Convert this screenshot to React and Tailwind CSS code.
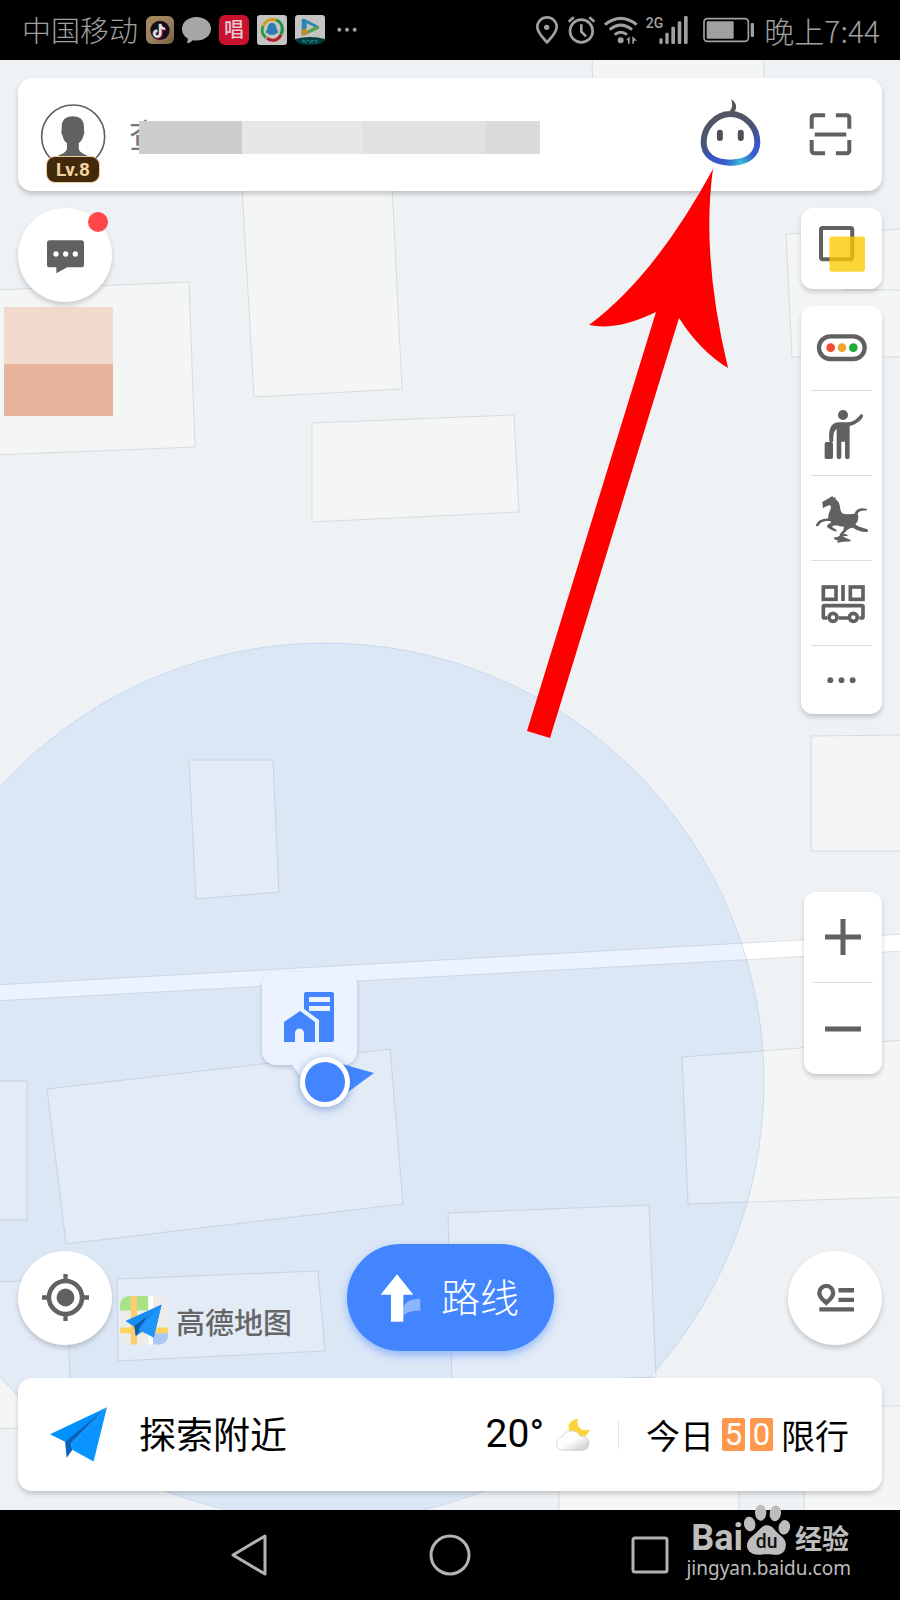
import React from "react";

const SANS = "font-['Roboto','Noto_Sans_CJK_SC',sans-serif]";

/* ---------- status bar ---------- */

function StatusBar() {
  return (
    <header className="flex h-[60px] shrink-0 items-center justify-between bg-black pl-[22px] pr-5 text-[#a0a0a0]">
      <div className="flex items-center gap-2">
        <span className="pt-1 text-[29px] font-light leading-none">中国移动</span>
        <svg viewBox="0 0 84 84" className="size-7" aria-hidden="true">
          <defs>
            <linearGradient id="gold" x1="0" y1="0" x2="1" y2="1">
              <stop offset="0" stopColor="#a8895c" />
              <stop offset="0.5" stopColor="#9b8160" />
              <stop offset="1" stopColor="#7a5f3c" />
            </linearGradient>
          </defs>
          <rect width="84" height="84" rx="18" fill="url(#gold)" />
          <circle cx="42" cy="43" r="29" fill="#190d19" />
          <g fill="none" strokeWidth="7">
            <path d="M43 24v29a9 9 0 1 1-9-9M43 26c1 8 6 12 14 12" stroke="#2bb5b5" transform="translate(-2 -1)" />
            <path d="M43 24v29a9 9 0 1 1-9-9M43 26c1 8 6 12 14 12" stroke="#c02a50" transform="translate(3 2)" />
            <path d="M43 24v29a9 9 0 1 1-9-9M43 26c1 8 6 12 14 12" stroke="#e4e4e4" />
          </g>
        </svg>
        <svg viewBox="0 0 86 80" className="w-[29px]" fill="#a6a6a6" aria-hidden="true">
          <path d="M43 0c24 0 43 15 43 35S67 70 43 70c-4 0-8 0-11-1-6 6-12 9-19 10 3-4 5-9 4-15C7 58 0 48 0 35 0 15 19 0 43 0Z" />
        </svg>
        <span className="flex size-[30px] items-center justify-center rounded-md bg-[#c8102f] text-[20px] font-medium leading-none text-[#e6c9cd]">
          唱
        </span>
        <svg viewBox="0 0 90 90" className="size-[30px]" aria-hidden="true">
          <rect width="90" height="90" rx="10" fill="#c4c4c4" />
          <g fill="none" strokeWidth="9">
            <path d="M19 32c8-18 27-23 43-15" stroke="#d19a1c" />
            <path d="M58 15c18 8 23 28 13 44" stroke="#1d9344" />
            <path d="M72 60c-10 18-28 20-42 10" stroke="#b51d2a" />
            <path d="M18 33c-6 14-1 28 9 35" stroke="#2f9b38" />
          </g>
          <path d="M45 24c9 0 13 6 13 15l5 11c1 4-1 5-4 3-2 5-6 6-14 6s-12-1-14-6c-3 2-5 1-4-3l5-11c0-9 4-15 13-15Z" fill="#2c7cb0" />
        </svg>
        <svg viewBox="0 0 90 90" className="size-[30px]" aria-hidden="true">
          <path d="M10 0h70a10 10 0 0 1 10 10v62H0V10A10 10 0 0 1 10 0Z" fill="#c4c4c4" />
          <path d="M0 72q45-12 90 0c0 8-12 18-45 18S0 80 0 72Z" fill="#073b3b" />
          <path d="M20 76h10m4 0h8m4 0h10m4 0h8M22 81h14m6 0h12m5 0h8" stroke="#1a8f8f" strokeWidth="3" />
          <path d="M20 16c0-5 5-6 9-4l40 20c5 3 5 7 0 10L29 60c-5 2-9 1-9-4Z" fill="#2a86b5" />
          <path d="M20 50l49-17c4 3 4 6 0 9L29 60c-5 2-9 1-9-4Z" fill="#56a33b" />
          <path d="M20 44l18-4v15l-9 5c-5 2-9 1-9-4Z" fill="#c78b25" />
          <path d="M35 25l23 11-23 12Z" fill="#c4c4c4" />
        </svg>
        <svg viewBox="0 0 60 16" className="ml-1 w-5" fill="#a0a0a0" aria-hidden="true">
          <circle cx="7" cy="8" r="6" />
          <circle cx="30" cy="8" r="6" />
          <circle cx="53" cy="8" r="6" />
        </svg>
      </div>
      <div className="flex items-center gap-2">
        <svg viewBox="258 45 72 90" className="w-6" fill="none" stroke="#a0a0a0" strokeWidth="8" aria-hidden="true">
          <path d="M294 127c-14-16-29-29-29-46a29 29 0 0 1 58 0c0 17-15 30-29 46Z" />
          <circle cx="293" cy="82" r="8" fill="#a0a0a0" stroke="none" />
        </svg>
        <svg viewBox="354 45 87 90" className="w-[29px]" fill="none" stroke="#a0a0a0" strokeWidth="8" aria-hidden="true">
          <circle cx="397" cy="93" r="34" />
          <path d="M397 73v22l14 14M359 65l15-13M436 65l-15-13" />
        </svg>
        <svg viewBox="462 45 102 90" className="w-[34px]" fill="none" stroke="#a0a0a0" strokeWidth="9" aria-hidden="true">
          <path d="M465 74q47-38 95 0M479 89q33-27 67 0M494 104q18-14 37 0" />
          <circle cx="512" cy="121" r="9" fill="#a0a0a0" stroke="none" />
          <path d="M528 121l11-12v22h-5v-10ZM547 109v22h5v-9h9Z" fill="#a0a0a0" stroke="none" />
        </svg>
        <div className="flex items-end">
          <span className="self-start text-[14px] font-medium leading-[14px]">2G</span>
          <svg viewBox="632 48 90 84" className="-ml-1 h-7 w-[30px]" fill="#a0a0a0" aria-hidden="true">
            <rect x="633" y="115" width="10" height="17" rx="4" />
            <rect x="651" y="98" width="10" height="34" rx="4" />
            <rect x="669" y="80" width="11" height="52" rx="4" />
            <rect x="688" y="64" width="11" height="68" rx="4" />
            <rect x="707" y="48" width="11" height="84" rx="4" />
          </svg>
        </div>
        <svg viewBox="750 45 165 90" className="ml-1 w-[55px]" aria-hidden="true">
          <rect x="759" y="56" width="133" height="68" rx="10" fill="none" stroke="#a0a0a0" strokeWidth="5" />
          <rect x="767" y="64" width="81" height="52" rx="3" fill="#a0a0a0" />
          <rect x="899" y="69" width="10" height="42" rx="4" fill="#a0a0a0" />
        </svg>
        <time className="font-['Noto_Sans_CJK_SC',sans-serif] text-[30px] font-light leading-none">晚上7:44</time>
      </div>
    </header>
  );
}

/* ---------- map ---------- */

const BUILDINGS = [
  "592,50 763,50 766,120 593,120",
  "241,170 391,165 402,389 254,397",
  "-5,290 189,282 195,447 -5,455",
  "312,423 514,415 519,512 312,522",
  "786,234 905,229 905,357 792,357",
  "811,736 905,735 905,851 811,851",
  "682,1057 905,1040 905,1197 688,1204",
  "189,760 273,760 279,892 196,899",
  "47,1089 390,1049 403,1204 66,1244",
  "-5,1081 27,1081 27,1220 -5,1220",
  "448,1213 649,1205 656,1377 452,1385",
  "117,1279 318,1271 325,1351 118,1361",
  "-5,1282 66,1279 72,1426 -5,1429",
  "559,1470 739,1470 739,1515 559,1515",
  "804,1406 905,1406 905,1515 804,1515",
];

function MapCanvas() {
  return (
    <svg viewBox="0 60 900 1450" preserveAspectRatio="xMidYMid slice" className="absolute inset-0 size-full" aria-hidden="true">
      <defs>
        <filter id="soft" x="-50%" y="-50%" width="200%" height="200%">
          <feDropShadow dx="0" dy="2" stdDeviation="5" floodColor="#3f6fc0" floodOpacity="0.6" />
        </filter>
        <filter id="lift" x="-30%" y="-30%" width="160%" height="160%">
          <feDropShadow dx="0" dy="2" stdDeviation="2" floodColor="#6a7fa5" floodOpacity="0.4" />
        </filter>
      </defs>
      <rect y="60" width="900" height="1450" fill="#eef2f5" />
      <g fill="#f4f6f5" stroke="#d8dbdd" strokeWidth="1">
        {BUILDINGS.map((points) => (
          <polygon key={points} points={points} />
        ))}
      </g>
      <path d="M-5 985L905 934V951L-5 1001Z" fill="#fff" stroke="#dcdfe2" />
      <path d="M843 290H900" stroke="#d6dadc" />
      <circle cx="325" cy="1082" r="439" fill="#4285ff" fillOpacity="0.1" stroke="#9fbbe8" strokeOpacity="0.4" />
      <rect x="4" y="307" width="109" height="57" fill="#f2d9cd" />
      <rect x="4" y="364" width="109" height="52" fill="#e8b49c" />
      <path
        d="M276 972h67a14 14 0 0 1 14 14v65a14 14 0 0 1-14 14l-28 20-11-4-12-16h-16a14 14 0 0 1-14-14v-65a14 14 0 0 1 14-14Z"
        fill="#edf3fe"
        filter="url(#lift)"
      />
      <g fill="#4285ff">
        <path d="M306 992h26a2 2 0 0 1 2 2v46a2 2 0 0 1-2 2h-13v-22l-15-11v-15a2 2 0 0 1 2-2Z" />
        <path d="M300 1011l15 11v20h-11v-9a4 4 0 0 0-9 0v9h-11v-20Z" />
        <path d="M309 997h21v5h-21ZM309 1006h21v5h-21Z" fill="#edf3fe" />
        <path d="M342 1064l32 9-26 19Z" />
      </g>
      <circle cx="325" cy="1082" r="25" fill="#fff" filter="url(#soft)" />
      <circle cx="325" cy="1082" r="20" fill="#4285ff" />
    </svg>
  );
}

/* ---------- search card ---------- */

function SearchCard() {
  return (
    <form className="flex h-[113px] items-center rounded-[14px] bg-white pl-[22px] pr-[30px] shadow-[0_3px_5px_rgba(0,0,0,0.2)]" onSubmit={(e) => e.preventDefault()}>
      <button type="button" aria-label="个人中心" className="relative mb-2 h-20 w-[66px] shrink-0 self-end">
        <svg viewBox="117 302 201 201" className="absolute left-0 top-0 w-[66px]" aria-hidden="true">
          <circle cx="218" cy="404" r="96" fill="#fff" stroke="#616161" strokeWidth="5" />
          <path d="M217 342c23 0 34 12 34 34v9c2 4 1 14-2 16-2 11-7 18-14 23v18c4 13 20 16 38 26-34 37-80 37-112 0 18-10 34-13 38-26v-18c-7-5-12-12-13-23-4-2-5-12-3-16v-9c0-22 11-34 34-34Z" fill="#616161" />
        </svg>
        <span className="absolute bottom-0 left-[6px] flex h-[27px] w-[54px] items-center justify-center rounded-[9px] border border-[#f0cf9c] bg-[#42290c] text-[19px] font-bold leading-none text-[#f5d2a0]">
          Lv.8
        </span>
      </button>
      <label className="relative ml-[23px] flex h-[52px] min-w-0 flex-1 items-center">
        <span className="sr-only">搜索</span>
        <input type="text" placeholder="查" className="h-[52px] w-full bg-transparent pt-1 text-[33px] outline-none placeholder:text-[#777]" />
        <span className="absolute left-[10px] top-[12px] flex h-[33px] w-[401px]" aria-hidden="true">
          <span className="w-[103px] bg-[#cdcdcd]" />
          <span className="w-[121px] bg-[#e7e7e7]" />
          <span className="w-[122px] bg-[#e1e1e1]" />
          <span className="flex-1 bg-[#dbdbdb]" />
        </span>
      </label>
      <button type="button" aria-label="语音助手" className="mb-1 shrink-0">
        <svg viewBox="754 290 184 208" className="w-[61px]" aria-hidden="true">
          <defs>
            <linearGradient id="bot" x1="0.3" y1="0" x2="0.7" y2="1">
              <stop offset="0" stopColor="#54565c" />
              <stop offset="0.45" stopColor="#4a5478" />
              <stop offset="0.75" stopColor="#3a55c8" />
              <stop offset="1" stopColor="#3566d0" />
            </linearGradient>
            <radialGradient id="glow" gradientUnits="userSpaceOnUse" cx="876" cy="486" r="46">
              <stop offset="0" stopColor="#35c3d6" />
              <stop offset="1" stopColor="#35a0d6" stopOpacity="0" />
            </radialGradient>
          </defs>
          <g fill="none" strokeWidth="18">
            <path d="M846 338c46 0 81 42 81 85 0 41-32 62-81 62s-81-21-81-62c0-43 35-85 81-85Z" stroke="url(#bot)" />
            <path d="M846 338c46 0 81 42 81 85 0 41-32 62-81 62s-81-21-81-62c0-43 35-85 81-85Z" stroke="url(#glow)" />
          </g>
          <path d="M848 294c19 12 18 27 8 42l-14-4c10-11 11-22 6-38Z" fill="#54565c" />
          <rect x="805" y="386" width="18" height="34" rx="9" fill="#4e5056" />
          <rect x="868" y="386" width="18" height="34" rx="9" fill="#4e5056" />
        </svg>
      </button>
      <button type="button" aria-label="扫一扫" className="ml-12 shrink-0">
        <svg viewBox="1080 343 128 128" className="w-[43px]" fill="none" stroke="#616161" strokeWidth="12" aria-hidden="true">
          <path d="M1088 390v-31q0-9 9-9h31M1160 350h31q9 0 9 9v31M1200 423v31q0 9-9 9h-31M1128 463h-31q-9 0-9-9v-31M1097 407h94" />
        </svg>
      </button>
    </form>
  );
}

/* ---------- side tools ---------- */

const CARD = "bg-white shadow-[0_3px_5px_rgba(0,0,0,0.18)]";

function TrafficIcon() {
  return (
    <svg viewBox="94 120 180 165" className="w-[60px]" aria-hidden="true">
      <rect x="115" y="169" width="137" height="68" rx="34" fill="none" stroke="#616161" strokeWidth="13" />
      <circle cx="150" cy="203" r="13" fill="#f04a30" />
      <circle cx="184" cy="203" r="13" fill="#f2a230" />
      <circle cx="218" cy="203" r="13" fill="#1fae35" />
    </svg>
  );
}

function TravelerIcon() {
  return (
    <svg viewBox="94 372 180 165" className="w-[60px]" fill="#616161" aria-hidden="true">
      <circle cx="187" cy="402" r="15" />
      <path d="M146 480c-3-34 4-55 27-56h28c15-1 28-9 38-23 5-4 11 1 7 8-9 14-22 22-39 26v94c0 7-14 7-14 0v-47h-11v47c0 7-14 7-14 0v-85c-7 4-11 14-10 35-1 6-11 6-12 1Z" />
      <rect x="132" y="483" width="25" height="51" rx="5" />
    </svg>
  );
}

function HorseIcon() {
  return (
    <svg viewBox="94 627 180 165" className="w-[60px] overflow-visible" fill="#616161" aria-hidden="true">
      <path d="M125 663l22-13 8-5 3 5 6-2 1 7c8 5 12 14 13 23 1 11 4 19 12 21 12 1 22 0 32-1 2-9 11-16 23-16l14 2v4l-13 1c-8 0-14 4-15 10 4 12 1 23-7 31 5 4 10 7 17 9l19 6c4 2 2 8-3 8-17-1-29-5-40-13-7 0-14 3-18 8l-11 11 10 1 4 4-12 2-12-2-1-4 11-12 2-11c-9 0-16-2-23-4-10 1-14 3-12 6l12 7 1 6-10-3-17-9c-5-6 1-12 10-15l-2-5c-11-1-21 0-28 5-4 3-6 7-9 11l-7-1c3-10 8-17 17-19 9-3 15-3 21-4-2-12 6-22 8-34l-3-6-14 5-7 5Z" />
      <path d="M158 770l14-3 9-6 7 6 10 5 12 5v4l-27 2-11 2-4-3 6-3-10-3Z" />
    </svg>
  );
}

function BusIcon() {
  return (
    <svg viewBox="94 882 180 165" className="w-[60px]" fill="none" stroke="#616161" strokeWidth="11" aria-hidden="true">
      <rect x="128" y="918" width="38" height="37" />
      <rect x="209" y="918" width="38" height="37" />
      <path d="M187 912v48M140 1011h-8q-4 0-4-4v-30q0-3 3-3h113q3 0 3 3v30q0 4-4 4h-7M174 1011h28" />
      <circle cx="157" cy="1009" r="12" />
      <circle cx="218" cy="1009" r="12" />
    </svg>
  );
}

const TOOLS = [
  { label: "实时路况", Icon: TrafficIcon },
  { label: "出行", Icon: TravelerIcon },
  { label: "景点", Icon: HorseIcon },
  { label: "公交", Icon: BusIcon },
];

function SideTools() {
  return (
    <div className="flex flex-col items-end justify-between">
      <div className="flex flex-col gap-[17px]">
        <button type="button" aria-label="图层" className={`flex h-[81px] w-[81px] items-center justify-center rounded-xl ${CARD}`}>
          <svg viewBox="1106 678 137 137" className="w-[46px]" aria-hidden="true">
            <rect x="1112" y="684" width="93" height="93" rx="5" fill="none" stroke="#616161" strokeWidth="12" />
            <rect x="1137" y="709" width="106" height="105" rx="8" fill="#fac800" fillOpacity="0.78" />
          </svg>
        </button>
        <div className={`flex w-[81px] flex-col items-center rounded-xl ${CARD}`}>
          {TOOLS.map(({ label, Icon }) => (
            <button key={label} type="button" aria-label={label} className="-mt-px flex h-[86px] w-[61px] items-center justify-center border-b border-[#dedede]">
              <Icon />
            </button>
          ))}
          <button type="button" aria-label="更多" className="flex h-[68px] w-full items-center justify-center">
            <svg viewBox="0 0 88 20" className="w-[29px]" fill="#616161" aria-hidden="true">
              <circle cx="10" cy="10" r="9" />
              <circle cx="44" cy="10" r="9" />
              <circle cx="78" cy="10" r="9" />
            </svg>
          </button>
        </div>
      </div>
      <div className={`flex w-[78px] flex-col items-center rounded-xl ${CARD}`}>
        <button type="button" aria-label="放大" className="flex h-[91px] w-[60px] items-center justify-center border-b border-[#dedede]">
          <svg viewBox="0 0 36 36" className="w-9" stroke="#616161" strokeWidth="5" aria-hidden="true">
            <path d="M0 18h36M18 0v36" />
          </svg>
        </button>
        <button type="button" aria-label="缩小" className="flex h-[91px] w-[60px] items-center justify-center">
          <svg viewBox="0 0 36 36" className="w-9" stroke="#616161" strokeWidth="5" aria-hidden="true">
            <path d="M0 18h36" />
          </svg>
        </button>
      </div>
    </div>
  );
}

function MessageButton() {
  return (
    <button type="button" aria-label="消息" className={`relative flex size-[94px] items-center justify-center rounded-full pt-1 ${CARD}`}>
      <svg viewBox="138 719 111 100" className="w-[37px]" aria-hidden="true">
        <path d="M146 720h95q8 0 8 8v65q0 8-8 8h-42l-33 18v-18h-20q-8 0-8-8v-65q0-8 8-8Z" fill="#616161" />
        <g fill="#fff">
          <circle cx="165" cy="761" r="8" />
          <circle cx="194" cy="761" r="8" />
          <circle cx="223" cy="761" r="8" />
        </g>
      </svg>
      <span className="absolute right-1 top-1 size-5 rounded-full bg-[#ff4648]" />
    </button>
  );
}

/* ---------- lower controls ---------- */

function LowerControls() {
  return (
    <div className="grid grid-cols-[1fr_auto_1fr] items-center">
      <div className="flex items-end gap-2">
        <button type="button" aria-label="定位" className={`flex size-[94px] items-center justify-center rounded-full ${CARD}`}>
          <svg viewBox="124 165 142 142" className="w-[47px]" aria-hidden="true">
            <circle cx="195" cy="236" r="50" fill="none" stroke="#616161" strokeWidth="14" />
            <circle cx="195" cy="236" r="27" fill="#616161" />
            <path d="M195 165v22M195 285v22M124 236h22M244 236h22" stroke="#616161" strokeWidth="13" />
          </svg>
        </button>
        <div className="flex items-center gap-2">
          <svg viewBox="359 233 142 144" className="w-12" aria-hidden="true">
            <defs>
              <clipPath id="tile">
                <rect x="359" y="233" width="142" height="144" rx="26" />
              </clipPath>
            </defs>
            <g clipPath="url(#tile)">
              <rect x="359" y="233" width="142" height="144" fill="#ececea" />
              <path d="M359 233h84v43h-84Z" fill="#a9e287" />
              <path d="M443 233h14v144h-14Z" fill="#fff" />
              <path d="M457 343h44v34h-44Z" fill="#a9c9f5" />
              <path d="M359 326h142v17H359Z" fill="#fcd462" />
              <path d="M391 233h18v144h-18Z" fill="#fdcd70" />
            </g>
            <path d="M375 307l107-49-23 98-34-18-19 14-4-28Z" fill="#178ef5" />
            <path d="M401 322l40-30-24 34-1 8-10 18Z" fill="#0c5cae" />
            <path d="M416 333l66-75-23 98Z" fill="#2196fa" />
          </svg>
          <span className="pt-2 text-[29px] font-medium leading-none text-[#666]">高德地图</span>
        </div>
      </div>
      <button type="button" className="flex h-[107px] w-[207px] items-center justify-center gap-5 rounded-full bg-[#4285ff] text-white shadow-[0_4px_8px_rgba(66,133,255,0.5)]">
        <svg viewBox="1142 160 120 144" className="w-10" aria-hidden="true">
          <path d="M1209 285v-20q2-30 51-31v36q-38-1-51 15Z" fill="#fff" fillOpacity="0.4" />
          <path d="M1190 161l49 61h-30v81h-37v-81h-31Z" fill="#fff" />
        </svg>
        <span className="pt-1 text-[39px] font-light leading-none">路线</span>
      </button>
      <button type="button" aria-label="收藏" className={`flex size-[94px] items-center justify-center justify-self-end rounded-full ${CARD}`}>
        <svg viewBox="1100 192 112 88" className="w-[37px]" fill="none" stroke="#616161" strokeWidth="13" aria-hidden="true">
          <path d="M1128 252c-9-9-21-17-21-30a21 21 0 0 1 42 0c0 13-12 21-21 30Z" />
          <path d="M1165 214h47M1165 243h47M1107 272h105" />
        </svg>
      </button>
    </div>
  );
}

function InfoCard() {
  return (
    <section className={`flex h-[113px] items-center justify-between rounded-[14px] pl-8 pr-[33px] text-black ${CARD}`}>
      <a href="#nearby" className="flex items-center gap-8">
        <svg viewBox="149 562 174 166" className="w-[57px]" aria-hidden="true">
          <path d="M149 645L323 563 206 664 195 668Z" fill="#0091ff" />
          <path d="M195 668L323 563 212 674 218 692 200 717Z" fill="#0a62bb" />
          <path d="M212 674L323 563 282 728 218 693Z" fill="#0a94ff" />
        </svg>
        <span className="pt-1 text-[37px] leading-none">探索附近</span>
      </a>
      <div className="flex items-center">
        <a href="#weather" className="flex items-center gap-3">
          <span className="text-[39px] leading-none">20°</span>
          <svg viewBox="315 594 102 100" className="w-[34px]" aria-hidden="true">
            <defs>
              <linearGradient id="cloud" x1="0" y1="0" x2="1" y2="1">
                <stop offset="0.5" stopColor="#fdfdfd" />
                <stop offset="0.85" stopColor="#d4d4d4" />
              </linearGradient>
            </defs>
            <path d="M381 597c-8 22 12 42 34 31-2 16-14 26-31 24-22-3-34-20-31-36 3-11 14-18 28-19Z" fill="#fdd33c" />
            <path d="M338 691a21 21 0 0 1-3-42c4-20 46-23 52 0 14-4 27 6 27 21 0 13-8 21-20 21Z" fill="url(#cloud)" stroke="#c9c9c9" strokeWidth="2" />
          </svg>
        </a>
        <span className="ml-7 mr-[27px] h-7 w-px bg-[#e2e2e2]" />
        <a href="#limits" className="flex items-center gap-2 text-[34px] leading-none">
          <span className="pt-1">今日</span>
          <span className="flex gap-[5px] text-[31px] text-white">
            <span className="flex h-[33px] w-[23px] items-center justify-center rounded-xs bg-[#ff984c]">5</span>
            <span className="flex h-[33px] w-[23px] items-center justify-center rounded-xs bg-[#ff984c]">0</span>
          </span>
          <span className="pt-1">限行</span>
        </a>
      </div>
    </section>
  );
}

/* ---------- overlays ---------- */

function RedArrow() {
  return (
    <svg viewBox="527 168 203 572" className="pointer-events-none absolute left-[527px] top-[108px] w-[203px]" aria-hidden="true">
      <path d="M713 169Q655 276 589 325Q617 331 656 312L527 731L550 738L679 318Q700 351 728 368Q701 255 713 169Z" fill="#f00" />
    </svg>
  );
}

function Watermark() {
  return (
    <div className="pointer-events-none absolute bottom-5 right-[49px] flex flex-col text-[#bdbdbd]">
      <div className="mr-[2px] flex h-[54px] items-end self-end">
        <span className="text-[36px] font-bold leading-[36px]">Bai</span>
        <svg viewBox="885 850 144 155" className="w-12" fill="#bdbdbd" aria-hidden="true">
          <ellipse cx="905" cy="910" rx="17" ry="22" transform="rotate(-12 905 910)" />
          <ellipse cx="938" cy="876" rx="17" ry="24" />
          <ellipse cx="982" cy="878" rx="17" ry="24" transform="rotate(8 982 878)" />
          <ellipse cx="1009" cy="920" rx="17" ry="22" transform="rotate(12 1009 920)" />
          <path d="M957 914c17 0 23 16 35 26 14 11 24 20 21 38-2 19-18 26-36 24-14-2-26-2-40 0-20 2-38-6-40-25-1-19 12-27 24-38 12-9 19-25 36-25Z" />
          <text x="956" y="983" textAnchor="middle" fontSize="58" fontWeight="500" fill="#111" fontFamily="Roboto, sans-serif">du</text>
        </svg>
        <span className="ml-1 text-[27px] font-bold leading-[32px]">经验</span>
      </div>
      <span className="font-['Noto_Sans',sans-serif] text-[19px] leading-[24px]">jingyan.baidu.com</span>
    </div>
  );
}

function NavBar() {
  return (
    <nav className="h-[90px] shrink-0 bg-black" aria-label="系统导航">
      <div className="mx-auto grid h-full w-2/3 grid-cols-3 place-items-center">
        <button type="button" aria-label="返回">
          <svg viewBox="0 0 42 44" className="w-[42px]" fill="none" stroke="#b3b3b3" strokeWidth="3" strokeLinejoin="round" aria-hidden="true">
            <path d="M36 3v38L4 22Z" />
          </svg>
        </button>
        <button type="button" aria-label="主屏幕">
          <svg viewBox="0 0 42 42" className="w-[42px]" fill="none" stroke="#b3b3b3" strokeWidth="3" aria-hidden="true">
            <circle cx="21" cy="21" r="19" />
          </svg>
        </button>
        <button type="button" aria-label="最近任务">
          <svg viewBox="0 0 38 38" className="w-[38px]" fill="none" stroke="#b3b3b3" strokeWidth="3" aria-hidden="true">
            <rect x="2" y="2" width="34" height="34" rx="2" />
          </svg>
        </button>
      </div>
    </nav>
  );
}

export default function App() {
  return (
    <div className={`relative flex min-h-screen flex-col bg-black ${SANS}`}>
      <StatusBar />
      <main className="relative flex flex-1 flex-col">
        <MapCanvas />
        <div className="relative flex flex-1 flex-col px-[18px] pb-[19px] pt-[18px]">
          <SearchCard />
          <div className="mt-[17px] flex flex-1 items-stretch justify-between">
            <div>
              <MessageButton />
            </div>
            <SideTools />
          </div>
          <div className="mt-[170px]">
            <LowerControls />
          </div>
          <div className="mt-[27px]">
            <InfoCard />
          </div>
        </div>
        <RedArrow />
      </main>
      <NavBar />
      <Watermark />
    </div>
  );
}
